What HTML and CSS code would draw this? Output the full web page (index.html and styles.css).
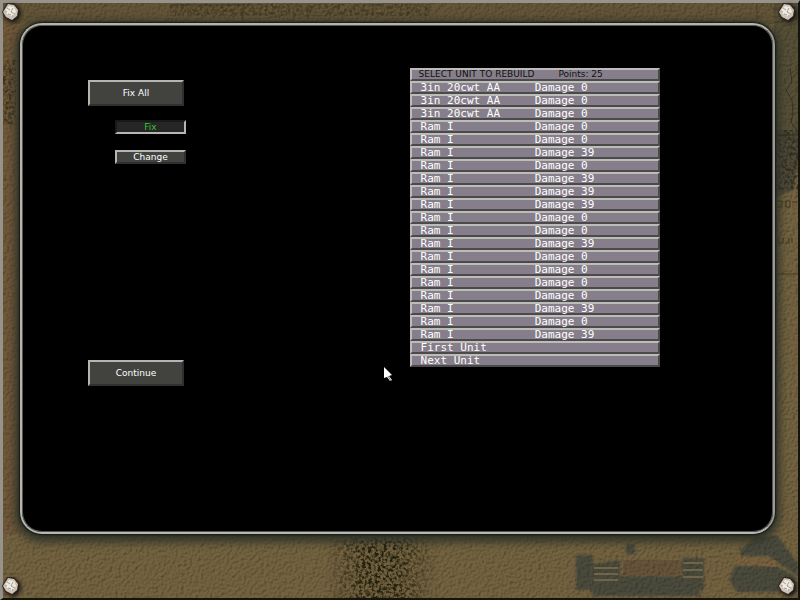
FILE: index.html
```html
<!DOCTYPE html>
<html lang="en">
<head>
    <meta charset="UTF-8">
    <meta name="viewport" content="width=device-width, initial-scale=1.0">
    <title>Rebuild Units</title>
    <link rel="stylesheet" href="styles.css">
</head>
<body>
    <svg class="backdrop" viewBox="0 0 800 600" preserveAspectRatio="none" aria-hidden="true">
        <defs>
            <filter id="plaster" x="0" y="0" width="100%" height="100%" color-interpolation-filters="sRGB">
                <feTurbulence type="fractalNoise" baseFrequency="0.35" numOctaves="4" seed="8" result="noise"/>
                <feDiffuseLighting in="noise" surfaceScale="0.8" diffuseConstant="1.1" lighting-color="#ffffff" result="light">
                    <feDistantLight azimuth="225" elevation="60"/>
                </feDiffuseLighting>
                <feBlend in="SourceGraphic" in2="light" mode="multiply"/>
            </filter>
            <filter id="rubble" x="0" y="0" width="100%" height="100%" color-interpolation-filters="sRGB">
                <feTurbulence type="fractalNoise" baseFrequency="0.32" numOctaves="3" seed="3"/>
                <feColorMatrix values="0 0 0 0 0.13  0 0 0 0 0.12  0 0 0 0 0.05  4 0 0 0 -1.7" result="spots"/>
                <feComposite in="spots" in2="SourceAlpha" operator="in"/>
            </filter>
            <filter id="soft"><feGaussianBlur stdDeviation="1"/></filter>
            <linearGradient id="band">
                <stop offset="0" stop-color="#000" stop-opacity="0"/>
                <stop offset="0.35" stop-color="#000"/>
                <stop offset="0.6" stop-color="#000"/>
                <stop offset="1" stop-color="#000" stop-opacity="0"/>
            </linearGradient>
        </defs>
        <g filter="url(#plaster)">
            <rect width="800" height="600" fill="#746340"/>
            <rect width="800" height="24" fill="#655638"/>
            <rect y="24" width="22" height="510" fill="#71593a"/>
            <rect x="774" width="26" height="170" fill="#575037"/>
            <path d="M774 130h26l-6 60-20 8z" fill="#514c3c"/>
            <!-- faded vehicle in the corner -->
            <g filter="url(#soft)" fill="#4b4c3c">
                <path d="M576 555h17v35h-17zM593 564l27-4v36h-27zM620 576h62v18h-62zM682 558h22v32h-22z"/>
                <path d="M592 586h108v10H592zM626 544h9v10h-9zM740 550l16-14h22l20 28v12l-30-20h-28z"/>
                <path d="M735 566h40l20 10v16h-58l-8-12z"/>
            </g>
            <path d="M623 560h58v16h-58z" fill="#68543b"/>
            <path d="M738 556l38 4v7l-40-3z" fill="#7a6240"/>
        </g>
        <g stroke="#8b7952" stroke-width="2" opacity="0.6">
            <path d="M594 568h24M594 574h24M594 580h24M683 563h20M683 570h20M683 577h20"/>
        </g>
        <rect x="325" y="534" width="115" height="66" fill="url(#band)" filter="url(#rubble)"/>
        <rect x="2" y="60" width="14" height="65" filter="url(#rubble)" opacity="0.6"/>
        <rect x="170" y="4" width="260" height="12" filter="url(#rubble)" opacity="0.4"/>
        <rect x="776" y="130" width="22" height="60" filter="url(#rubble)" opacity="0.6"/>
        <path d="M790 68l2 14-6 8 6 10 1 14-2 8 7 10M776 135h24M776 274h24" fill="none" stroke="#292818" opacity="0.7"/>
        <path d="M777 201h5v6h-5M786 201v6h4v-6zM792 202h5M778 238v5h5v-5M785 243h4v-5M792 238v5" fill="none" stroke="#3d3523"/>
        <path d="M243 5v18M308 5v14M170 5h75M757 4v15M773 10h10v12h-10" fill="none" stroke="#3b321d" opacity="0.7"/>
    </svg>

    <main class="panel">
        <div class="actions">
            <button type="button" class="btn">Fix All</button>
            <button type="button" class="btn small pressed">Fix</button>
            <button type="button" class="btn small">Change</button>
            <button type="button" class="btn continue">Continue</button>
        </div>

        <table class="units">
            <thead>
                <tr><th colspan="2"><div class="heading"><span>SELECT UNIT TO REBUILD</span><span>Points: 25</span></div></th></tr>
            </thead>
            <tbody>
                <tr><td>3in 20cwt AA</td><td>Damage 0</td></tr>
                <tr><td>3in 20cwt AA</td><td>Damage 0</td></tr>
                <tr><td>3in 20cwt AA</td><td>Damage 0</td></tr>
                <tr><td>Ram I</td><td>Damage 0</td></tr>
                <tr><td>Ram I</td><td>Damage 0</td></tr>
                <tr><td>Ram I</td><td>Damage 39</td></tr>
                <tr><td>Ram I</td><td>Damage 0</td></tr>
                <tr><td>Ram I</td><td>Damage 39</td></tr>
                <tr><td>Ram I</td><td>Damage 39</td></tr>
                <tr><td>Ram I</td><td>Damage 39</td></tr>
                <tr><td>Ram I</td><td>Damage 0</td></tr>
                <tr><td>Ram I</td><td>Damage 0</td></tr>
                <tr><td>Ram I</td><td>Damage 39</td></tr>
                <tr><td>Ram I</td><td>Damage 0</td></tr>
                <tr><td>Ram I</td><td>Damage 0</td></tr>
                <tr><td>Ram I</td><td>Damage 0</td></tr>
                <tr><td>Ram I</td><td>Damage 0</td></tr>
                <tr><td>Ram I</td><td>Damage 39</td></tr>
                <tr><td>Ram I</td><td>Damage 0</td></tr>
                <tr><td>Ram I</td><td>Damage 39</td></tr>
            </tbody>
            <tfoot>
                <tr><td colspan="2"><button type="button" class="page">First Unit</button></td></tr>
                <tr><td colspan="2"><button type="button" class="page">Next Unit</button></td></tr>
            </tfoot>
        </table>
    </main>

    <svg width="0" height="0" class="symbols" aria-hidden="true">
        <symbol id="bolt" viewBox="0 0 20 20">
            <path d="M6 1l7 0 5 6-1 7-6 5-7-3-3-6z" fill="#3a2417"/>
            <path d="M7 2l6 1 4 5-1 6-5 4-6-3-3-5z" fill="#c9c3b9"/>
            <path d="M8 4l5 1 2 5-4 5-5-3-2-4z" fill="#eeeae2"/>
            <path d="M6 6l3 2M12 6l-2 4 4 2M7 12l3 1M4 9l2 1M11 15l1-2" stroke="#a69a8e" fill="none"/>
        </symbol>
    </svg>
    <svg class="bolt top left" aria-hidden="true"><use href="#bolt"/></svg>
    <svg class="bolt top right" aria-hidden="true"><use href="#bolt"/></svg>
    <svg class="bolt bottom left" aria-hidden="true"><use href="#bolt"/></svg>
    <svg class="bolt bottom right" aria-hidden="true"><use href="#bolt"/></svg>

    <svg class="cursor" viewBox="0 0 10 15" aria-hidden="true">
        <path d="M0 0l8 8-3 1 3 4-2 1-3-4-3 1z" fill="#fff"/>
        <path d="M4 9l3 5" stroke="#777"/>
    </svg>
</body>
</html>
```

FILE: styles.css
```css
* {
    box-sizing: border-box;
}
body {
    margin: 0;
    min-height: 100vh;
    padding: 23px 25px 66px 20px;
    display: flex;
    position: relative;
    overflow: hidden;
    background-color: #6b5936;
    font-family: "DejaVu Sans", sans-serif;
    font-size: 9px;
}
/* worn metal edge round the screen */
body::after {
    content: "";
    position: absolute;
    inset: 0;
    border: 3px solid;
    border-color: #96938b #14130c #14130c #96938b;
    border-right-width: 2px;
    border-bottom-width: 2px;
    pointer-events: none;
}
.backdrop {
    position: absolute;
    top: 0;
    left: 0;
    width: 100%;
    height: 100%;
}
.symbols {
    position: absolute;
}
.panel {
    position: relative;
    flex: 1;
    display: grid;
    grid-template-columns: 9fr 7fr;
    align-items: start;
    padding: 43px 15% 43px 66px;
    background-color: #000;
    border: 2px solid;
    border-color: #b4b4b0 #9a9a98 #b8b8b2 #b4b4b0;
    border-radius: 22px;
    box-shadow: inset 0 0 0 1px #555552, 0 0 2px 1px #15160f, 0 3px 8px 5px #30352a;
}
.actions {
    display: flex;
    flex-direction: column;
    align-items: flex-start;
    padding-top: 12px;
}
.btn {
    width: 96px;
    height: 26px;
    padding: 0;
    background-color: #42433f;
    border: 2px solid;
    border-color: #b5b5b1 #303030 #303030 #b5b5b1;
    color: #fff;
    font: inherit;
}
.btn.small {
    width: 71px;
    height: 14px;
    margin: 14px 0 0 27px;
    line-height: 10px;
}
.btn.small + .small {
    margin-top: 16px;
}
.btn.pressed {
    background-color: #252625;
    border-color: #191919 #b5b5b1 #b5b5b1 #191919;
    color: #35c535;
}
.btn.continue {
    margin-top: 196px;
}
.units {
    width: 100%;
    table-layout: fixed;
    border-collapse: separate;
    border-spacing: 0;
    color: #fff;
    font-family: "DejaVu Sans Mono", monospace;
    font-size: 11px;
    line-height: 9px;
}
.units th,
.units td {
    height: 13px;
    padding: 0;
    background-color: #867e8a;
    border: 0 solid;
    border-color: #bcbcb8 #4b494a #4b494a #bcbcb8;
    border-top-width: 2px;
    border-bottom-width: 2px;
    text-align: left;
    white-space: nowrap;
}
.units tr > :first-child {
    border-left-width: 2px;
    padding-left: 9px;
}
.units tr > :last-child {
    border-right-width: 2px;
}
.units thead tr > th:first-child {
    padding-left: 7px;
    color: #111;
    font-family: "DejaVu Sans", sans-serif;
    font-size: 9px;
    font-weight: normal;
}
.heading {
    display: flex;
    gap: 24px;
}
.page {
    display: block;
    width: 100%;
    padding: 0;
    border: 0;
    background: none;
    color: inherit;
    font: inherit;
    text-align: left;
}
.bolt {
    position: absolute;
    z-index: 1;
    width: 20px;
    height: 20px;
    filter: drop-shadow(2px 2px 2px #111);
}
.top {
    top: 2px;
}
.bottom {
    bottom: 4px;
}
.left {
    left: 1px;
}
.right {
    right: 3px;
}
.cursor {
    position: absolute;
    left: 384px;
    top: 367px;
    width: 10px;
    height: 15px;
}
```
